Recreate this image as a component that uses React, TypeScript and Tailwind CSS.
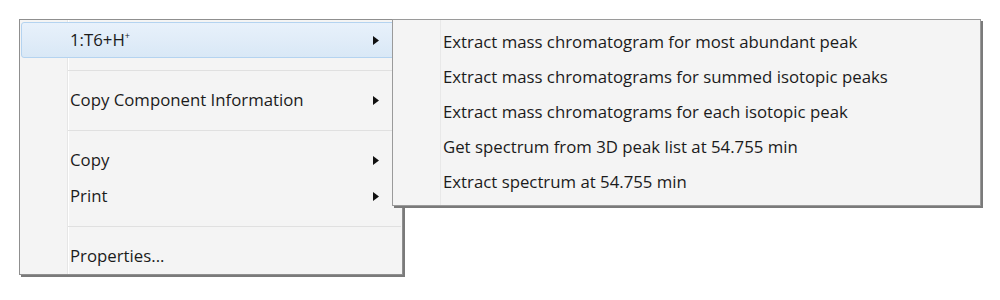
import React from "react";

const font = { fontFamily: '"Open Sans", "Noto Sans", sans-serif' };

function Arrow() {
  return (
    <svg width="6" height="9" viewBox="0 0 6 9" className="block">
      <path d="M0 0 L6 4.5 L0 9 Z" fill="#111" />
    </svg>
  );
}

function Row({ label, arrow, hl }: { label: React.ReactNode; arrow?: boolean; hl?: boolean }) {
  return (
    <div
      className={
        "flex h-[36px] items-center pr-[21px] " +
        (hl
          ? "rounded-[3px] border border-[#b4d3f0] bg-gradient-to-b from-[#e8f1fb] to-[#d9e8f6]"
          : "border border-transparent")
      }
    >
      <div className="w-[48px] shrink-0" />
      <div className="flex-1 text-[16.8px] leading-none text-[#1b1b1b]">{label}</div>
      {arrow && <Arrow />}
    </div>
  );
}

function Sep() {
  return (
    <div className="flex h-[24px] items-center pl-[47px]">
      <div className="h-px flex-1 bg-[#e0e0e0]" />
    </div>
  );
}

const subItems = [
  "Extract mass chromatogram for most abundant peak",
  "Extract mass chromatograms for summed isotopic peaks",
  "Extract mass chromatograms for each isotopic peak",
  "Get spectrum from 3D peak list at 54.755 min",
  "Extract spectrum at 54.755 min",
];

export default function App() {
  return (
    <div className="relative h-[300px] w-[1000px] overflow-hidden bg-white" style={font}>
      {/* main menu */}
      <div className="absolute left-[19px] top-[19px] w-[384px] border border-[#8f8f8f] bg-[#f4f4f4] px-[1px] pt-[2px] shadow-[2px_2px_0_#7a7a7a]">
        <div className="pointer-events-none absolute bottom-0 left-[47px] top-0 w-px bg-[#e6e6e6]" />
        <div className="pointer-events-none absolute bottom-0 left-[48px] top-0 w-px bg-white" />
        <div className="relative flex flex-col">
          <Row
            hl
            arrow
            label={
              <span>
                1:T6+H<span className="relative top-[-7px] text-[9px]">+</span>
              </span>
            }
          />
          <Sep />
          <Row arrow label="Copy Component Information" />
          <Sep />
          <Row arrow label="Copy" />
          <Row arrow label="Print" />
          <Sep />
          <Row label="Properties..." />
        </div>
      </div>

      {/* submenu */}
      <div className="absolute left-[392px] top-[19px] w-[589px] border border-[#9a9a9a] bg-[#f4f4f4] py-[5px] shadow-[2px_2px_0_#7a7a7a]">
        <div className="pointer-events-none absolute bottom-0 left-[47px] top-0 w-px bg-[#e8e8e8]" />
        <div className="relative flex flex-col">
          {subItems.map((s) => (
            <div key={s} className="flex h-[35px] items-center pl-[50px]">
              <div className="text-[16.8px] leading-none text-[#1b1b1b]">{s}</div>
            </div>
          ))}
        </div>
      </div>
    </div>
  );
}
